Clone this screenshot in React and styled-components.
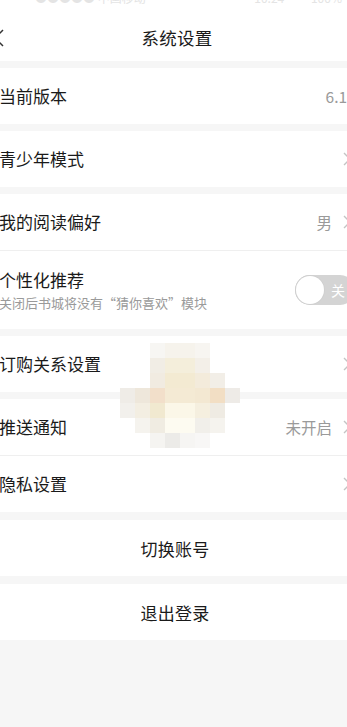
import React from "react";
import styled, { createGlobalStyle } from "styled-components";

const Global = createGlobalStyle`
  html, body { margin: 0; padding: 0; background: #f6f6f6; }
  body { overflow: hidden; width: 347px; height: 727px; font-family: "Noto Sans CJK SC", "Noto Sans", sans-serif; }
  #root { width: 347px; min-height: 727px; position: relative; overflow: hidden; }
`;

const Screen = styled.div`
  width: 370px;
  margin-left: -8px;
  min-height: 727px;
  background: #f6f6f6;
  display: flex;
  flex-direction: column;
`;

const StatusBar = styled.div`
  height: 13px;
  background: #fff;
  overflow: hidden;
  display: flex;
  justify-content: space-between;
  padding: 0 20px 0 43px;
  font-size: 12px;
  color: #e4e4e4;
  line-height: 12px;
  span { margin-top: -8px; }
`;

const Nav = styled.div`
  height: 48px;
  background: #fff;
  display: flex;
  align-items: center;
  justify-content: center;
  position: relative;
`;

const Back = styled.svg`
  position: absolute;
  left: 2px;
  top: 16px;
`;

const Title = styled.div`
  font-size: 17.5px;
  color: #1a1a1a;
  letter-spacing: 0.3px;
`;

const Group = styled.div`
  background: #fff;
  margin-top: ${(p) => p.$gap}px;
  display: flex;
  flex-direction: column;
`;

const Row = styled.div`
  height: ${(p) => p.$h || 56}px;
  display: flex;
  align-items: center;
  justify-content: ${(p) => (p.$center ? "center" : "space-between")};
  padding: 0 11px 0 7px;
  border-top: ${(p) => (p.$divider ? "1px solid #efefef" : "none")};
`;

const LabelBox = styled.div`
  display: flex;
  flex-direction: column;
  gap: 3px;
`;

const Label = styled.div`
  font-size: 17px;
  color: #1a1a1a;
  line-height: 22px;
`;

const Sub = styled.div`
  font-size: 13px;
  color: #9a9a9a;
  line-height: 18px;
`;

const CenterText = styled.div`
  font-size: 17px;
  color: #1a1a1a;
  letter-spacing: 0.3px;
`;

const Right = styled.div`
  display: flex;
  align-items: center;
  gap: 11px;
`;

const Value = styled.div`
  font-size: 15.5px;
  color: #9a9a9a;
  margin-right: ${(p) => p.$edge || 0}px;
`;

const Toggle = styled.div`
  width: 60px;
  height: 30px;
  border-radius: 15px;
  background: #d4d4d4;
  display: flex;
  align-items: center;
  margin-right: -4px;
`;

const Knob = styled.div`
  width: 28px;
  height: 28px;
  border-radius: 50%;
  background: #fff;
  margin-left: 1px;
  box-shadow: 0 0 0 1px #cfcfcf;
`;

const ToggleText = styled.span`
  font-size: 14px;
  color: #fff;
  margin-left: 7px;
`;

const Mosaic = styled.div`
  position: absolute;
  left: 120px;
  top: 343px;
  display: grid;
  grid-template-columns: repeat(8, 15px);
  grid-auto-rows: 15px;
  pointer-events: none;
`;

const Cell = styled.div``;

const Chevron = () => (
  <svg width="8" height="14" viewBox="0 0 8 14">
    <path d="M1 1 L7 7 L1 13" fill="none" stroke="#c4c4c4" strokeWidth="1.4" />
  </svg>
);

const T = "transparent";
const mosaic = [
  [T, T, "#f7f6f3", "#f6f3ec", "#f6f3ec", "#f7f5f1", T, T],
  [T, T, "#f1ede5", "#f4eedb", "#f4eedb", "#f3efe8", T, T],
  [T, T, "#f1ebe1", "#f3ead2", "#f3ead2", "#f3ebdb", "#f2eee7", T],
  ["#efece7", "#eee7db", "#f2dfca", "#f4ead4", "#f4ead4", "#f3e8d2", "#f2dec4", "#eeebe7"],
  ["#f2f0ec", "#f3eee2", "#f1e9d0", "#fbf7e8", "#fbf7e8", "#f5efdf", "#efebe3", T],
  [T, "#f5f3ee", "#f0ece2", "#fdfbf1", "#fdfbf1", "#f1efea", "#f5f3ee", T],
  [T, T, "#f5f4f1", "#ecebe8", "#f6f5f3", "#f8f7f6", T, T],
];

export default function App() {
  return (
    <>
      <Global />
      <Screen>
        <StatusBar>
          <span>●●●●● 中国移动</span>
          <span>10:24　　 100%</span>
        </StatusBar>
        <Nav>
          <Back width="12" height="18" viewBox="0 0 12 18">
            <path d="M9 1 L1 9 L9 17" fill="none" stroke="#333" strokeWidth="1.5" />
          </Back>
          <Title>系统设置</Title>
        </Nav>

        <Group $gap={7}>
          <Row>
            <Label>当前版本</Label>
            <Right>
              <Value $edge={-9}>6.1.0</Value>
            </Right>
          </Row>
        </Group>

        <Group $gap={7}>
          <Row>
            <Label>青少年模式</Label>
            <Right>
              <Chevron />
            </Right>
          </Row>
        </Group>

        <Group $gap={7}>
          <Row>
            <Label>我的阅读偏好</Label>
            <Right>
              <Value>男</Value>
              <Chevron />
            </Right>
          </Row>
          <Row $h={78} $divider>
            <LabelBox>
              <Label>个性化推荐</Label>
              <Sub>关闭后书城将没有“猜你喜欢”模块</Sub>
            </LabelBox>
            <Toggle>
              <Knob />
              <ToggleText>关</ToggleText>
            </Toggle>
          </Row>
        </Group>

        <Group $gap={7}>
          <Row>
            <Label>订购关系设置</Label>
            <Right>
              <Chevron />
            </Right>
          </Row>
        </Group>

        <Group $gap={7}>
          <Row>
            <Label>推送通知</Label>
            <Right>
              <Value>未开启</Value>
              <Chevron />
            </Right>
          </Row>
          <Row $divider>
            <Label>隐私设置</Label>
            <Right>
              <Chevron />
            </Right>
          </Row>
        </Group>

        <Group $gap={8}>
          <Row $center>
            <CenterText>切换账号</CenterText>
          </Row>
        </Group>

        <Group $gap={8}>
          <Row $center>
            <CenterText>退出登录</CenterText>
          </Row>
        </Group>
      </Screen>
      <Mosaic>
        {mosaic.flat().map((c, i) => (
          <Cell key={i} style={{ background: c }} />
        ))}
      </Mosaic>
    </>
  );
}
